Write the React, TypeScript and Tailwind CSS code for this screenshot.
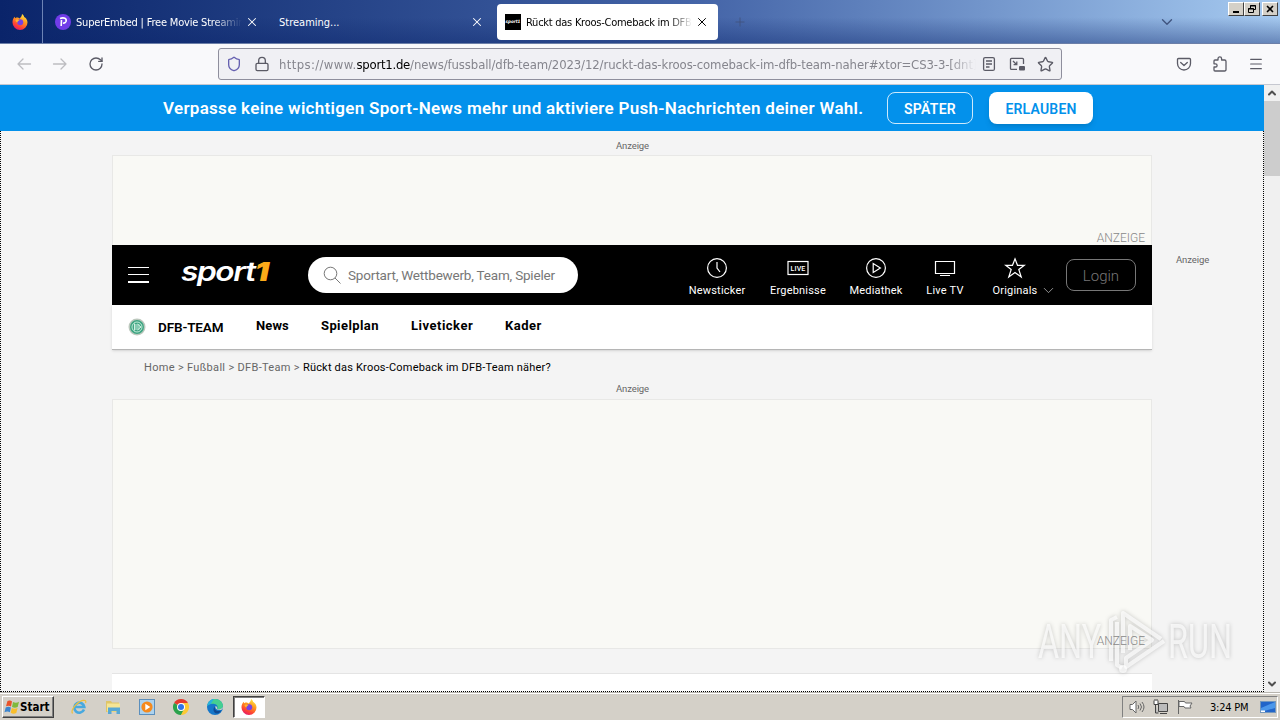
import type { ReactNode } from "react";
import { ChevronDown, ChevronUp, Lock, Menu, Plus, RotateCw, Shield, Star, X } from "lucide-react";
import clsx from "clsx";

const NAV_LINKS = [
  { label: "News", className: "w-[65px] tracking-[0.1px]" },
  { label: "Spielplan", className: "w-[90px] tracking-[0.4px]" },
  { label: "Liveticker", className: "w-[94px] tracking-[0.5px]" },
  { label: "Kader", className: "w-[60px] tracking-[0.5px]" },
];

function FirefoxIcon() {
  return (
    <svg viewBox="0 0 16 16" className="size-4 shrink-0">
      <defs>
        <linearGradient id="fox" x1="0.8" y1="0" x2="0.3" y2="1">
          <stop offset="0" stopColor="#fff04a" />
          <stop offset="0.4" stopColor="#ff9a1f" />
          <stop offset="0.75" stopColor="#ff4433" />
          <stop offset="1" stopColor="#e3186c" />
        </linearGradient>
      </defs>
      <path d="M10 0c1.500 1 2 2.200 2.200 3 .8.3 3.300 2.200 3.300 5.500A7.500 7.500 0 0 1 .5 8.500C.4 6 1.500 3.700 2.800 2.700l.4 1.500 1.200-.7C6 3.300 7 4 7.500 4.500 8.500 3.500 10 2.500 10 0z" fill="url(#fox)" />
      <circle cx="8.200" cy="8.300" r="3" fill="#7542e5" />
      <path d="M3.500 6c1.500-.8 2.500-.6 4 .2C6 7 5.500 7 5.600 8.500c-1-.2-2-1-2.100-2.500z" fill="#ffb52e" />
    </svg>
  );
}

function WindowButton({ children, className }: { children: ReactNode; className?: string }) {
  return (
    <div className={clsx("flex h-[14px] w-4 items-center justify-center border border-t-white border-l-white border-r-[#404040] border-b-[#404040] bg-[#d4d0c8]", className)}>
      {children}
    </div>
  );
}

function TabBar() {
  return (
    <div className="flex h-11 border-b border-[#6c7fa8] bg-linear-to-r from-[#0a246a] via-[#4565a8] via-55% to-[#a6caf0] text-[11px] text-white">
      <div className="flex w-full bg-linear-to-b from-transparent from-40% to-[#0a246a]/40">
        <div className="flex w-[43px] items-center justify-center border-r border-[#6d83b5] pr-0.5">
          <FirefoxIcon />
        </div>
        <div className="flex w-[225px] items-center pl-3">
          <div className="mr-[5px] flex size-4 items-center justify-center rounded-full bg-[#713ce8]">
            <svg viewBox="0 0 16 16" className="size-4">
              <path d="M5 4.500c4-1.500 7 0 6 3-.8 2-3 1.500-3 1.500M6.500 6l-.3 6" fill="none" stroke="#fff" strokeWidth="1.600" />
            </svg>
          </div>
          <span className="w-[166px] overflow-hidden pt-[3px] tracking-[-0.19px] whitespace-nowrap [mask-image:linear-gradient(to_right,#000_82%,transparent)]">SuperEmbed | Free Movie Streaming</span>
          <X className="ml-[3px] size-3.5 shrink-0" strokeWidth={1.8} />
        </div>
        <div className="flex w-[229px] items-center pl-[11px]">
          <span className="w-[191px] pt-[3px]">Streaming...</span>
          <X className="size-3.5" strokeWidth={1.8} />
        </div>
        <div className="mt-1 flex h-9 w-[221px] items-center rounded bg-white pl-2 text-black">
          <div className="mr-[5px] flex size-4 items-center justify-center overflow-hidden bg-black text-[4.500px] font-bold text-white italic">sport1</div>
          <span className="w-[166px] overflow-hidden pt-[3px] tracking-[-0.26px] whitespace-nowrap [mask-image:linear-gradient(to_right,#000_86%,transparent)]">Rückt das Kroos-Comeback im DFB-Team</span>
          <X className="ml-[3px] size-3.5 shrink-0" strokeWidth={1.7} />
        </div>
        <div className="flex flex-1 items-center justify-between pl-[15px] text-[#40547f]">
          <Plus className="size-3.5" strokeWidth={1.5} />
          <ChevronDown className="mr-2 ml-auto size-[18px]" strokeWidth={1.8} />
        </div>
        <div className="flex w-[96px] justify-end pt-0.5 pr-0.5">
          <div className="flex h-[14px]">
            <WindowButton><i className="mt-1.5 h-0.5 w-1.5 bg-black" /></WindowButton>
            <WindowButton>
              <svg viewBox="0 0 10 10" className="size-2.5" fill="none" stroke="#000">
                <path d="M3.500 4V1.500h5v4H7M3 2h6M1.500 4.500h5v4h-5zM1 5h6" />
              </svg>
            </WindowButton>
            <WindowButton className="ml-0.5"><X className="size-2.5 text-black" strokeWidth={4} /></WindowButton>
          </div>
        </div>
      </div>
    </div>
  );
}

function Arrow({ flip }: { flip?: boolean }) {
  return (
    <svg viewBox="0 0 16 16" className={clsx("size-4", flip && "rotate-180")} fill="none" stroke="#bdbdc1" strokeWidth="1.300" strokeLinecap="round" strokeLinejoin="round">
      <path d="M14.500 8H2M7 3 2 8l5 5" />
    </svg>
  );
}

function Toolbar() {
  return (
    <div className="flex h-[41px] items-center border-b border-[#c6c8d0] bg-[#f9f9fb] text-[#5b5b66]">
      <div className="flex w-[218px] items-center gap-5 pl-4">
        <Arrow />
        <Arrow flip />
        <RotateCw className="size-4" strokeWidth={2} />
      </div>
      <div className="flex h-8 w-[844px] items-center rounded-[3px] border border-[#8f8f9d] bg-[#f0f0f4] pl-[7px]">
        <Shield className="size-4 text-[#6560b0]" strokeWidth={2} />
        <Lock className="ml-3 size-4" strokeWidth={2} />
        <span className="ml-[9px] w-[697px] shrink-0 overflow-hidden pt-0.5 text-[13px] font-light tracking-[-0.11px] whitespace-nowrap text-[#85858d] [mask-image:linear-gradient(to_right,#000_96%,transparent)]">
          <span className="tracking-[0.36px]">https://www.</span>
          <span className="font-normal tracking-[-0.25px] text-black">sport1.de</span>/news/fussball/dfb-team/2023/12/ruckt-das-kroos-comeback-im-dfb-team-naher#xtor=CS3-3-[dnt]
        </span>
        <svg viewBox="0 0 16 16" className="ml-[5px] size-4" fill="none" stroke="currentColor" strokeWidth="1.300">
          <rect x="2.600" y="1.600" width="10.800" height="12.800" rx="1.500" />
          <path d="M5 5h6M5 8h6M5 11h3.500" />
        </svg>
        <svg viewBox="0 0 16 16" className="ml-3 size-4" fill="none" stroke="currentColor" strokeWidth="1.300">
          <path d="M8 13.400H2.500a1 1 0 0 1-1-1v-9a1 1 0 0 1 1-1h11a1 1 0 0 1 1 1V8M4 5l3.500 3.500M7.800 5.500v3.200H4.600" />
          <rect x="10" y="10" width="6" height="4.500" rx="1" fill="currentColor" stroke="none" />
        </svg>
        <Star className="ml-3 size-[17px]" strokeWidth={1.9} />
      </div>
      <div className="ml-[114px] flex items-center gap-5">
        <svg viewBox="0 0 16 16" className="size-4" fill="none" stroke="currentColor" strokeWidth="1.300" strokeLinecap="round" strokeLinejoin="round">
          <path d="M1.500 3.500a1 1 0 0 1 1-1h11a1 1 0 0 1 1 1V7.500a6.500 6.500 0 0 1-13 0zM4.700 6.500 8 9.500l3.300-3" />
        </svg>
        <svg viewBox="0 0 16 16" className="size-4" fill="none" stroke="currentColor" strokeWidth="1.300" strokeLinejoin="round">
          <path d="M2 6V5a1 1 0 0 1 1-1h3V2.700a1.800 1.800 0 0 1 3.600 0V4h3a1.400 1.400 0 0 1 1.400 1.400v8A1.400 1.400 0 0 1 12.600 15H3a1 1 0 0 1-1-1v-3h1.500a1.500 1.500 0 0 0 0-3.200H2z" />
        </svg>
        <Menu className="size-4" strokeWidth={1.8} />
      </div>
    </div>
  );
}

function PushBanner() {
  return (
    <div className="flex h-[46px] items-center bg-[#0391eb] pl-[163px] font-['Roboto'] text-white">
      <span className="w-[724px] pt-0.5 text-[17px] font-semibold tracking-[0.29px] whitespace-nowrap">
        Verpasse keine wichtigen Sport-News mehr und aktiviere Push-Nachrichten deiner Wahl.
      </span>
      <button className="h-8 w-[86px] rounded-lg border border-white/80 pt-0.5 text-[14px] font-semibold tracking-[0.3px]">SPÄTER</button>
      <button className="ml-4 h-8 w-[104px] rounded-lg bg-white pt-0.5 text-[14px] font-semibold tracking-[0.2px] text-[#0391eb] shadow-md">ERLAUBEN</button>
    </div>
  );
}

function HeaderItem({ label, className, children }: { label: string; className: string; children: ReactNode }) {
  return (
    <div className={clsx("flex flex-col items-center text-[11px] leading-[14px] tracking-[0.2px] text-white", className)}>
      <svg viewBox="0 0 22 22" className="mb-[5px] size-[22px]" fill="none" stroke="#fff" strokeWidth="1.200">
        {children}
      </svg>
      <span className="whitespace-nowrap">{label}</span>
    </div>
  );
}

function SiteHeader() {
  return (
    <header className="flex h-[60px] items-center bg-black">
      <div className="ml-4 flex w-[21px] flex-col gap-[6px]">
        <i className="h-px bg-white" />
        <i className="h-px bg-white" />
        <i className="h-0.5 bg-white" />
      </div>
      <div className="ml-8 w-[91px] text-[26px] leading-[30px] font-semibold whitespace-nowrap text-white italic">
        <span className="inline-block origin-left -translate-y-[3px] scale-x-[1.22] font-['Inter'] tracking-[-0.045em]">
          sport<b className="text-[#fbaa19]">1</b>
        </span>
      </div>
      <div className="ml-9 flex h-9 w-[270px] items-center rounded-full bg-white pl-[15px] text-[#777]">
        <svg viewBox="0 0 18 18" className="size-[18px]" fill="none" stroke="currentColor" strokeWidth="1">
          <circle cx="7.500" cy="7.500" r="6.300" />
          <path d="m12 12 5.500 5.500" />
        </svg>
        <span className="ml-[7px] pt-px text-[13.500px] tracking-[-0.2px] whitespace-nowrap">Sportart, Wettbewerb, Team, Spieler</span>
      </div>
      <div className="ml-[109px] flex pt-1">
        <HeaderItem label="Newsticker" className="w-[60px]">
          <circle cx="11" cy="11" r="9.400" />
          <path d="M11 5v6l3 4" />
        </HeaderItem>
        <HeaderItem label="Ergebnisse" className="ml-5 w-[62px]">
          <rect x="1" y="4.500" width="20" height="13" />
          <text x="11" y="14" fontSize="8" fontWeight="500" textAnchor="middle" textLength="15" lengthAdjust="spacingAndGlyphs" fill="#fff" stroke="none">LIVE</text>
        </HeaderItem>
        <HeaderItem label="Mediathek" className="ml-[18px] w-[58px]">
          <circle cx="11" cy="11" r="9.400" />
          <path d="M8.200 6.500v9l7.200-4.500z" />
        </HeaderItem>
        <HeaderItem label="Live TV" className="ml-5 w-10">
          <path d="M1.500 4.500h19v12h-19zM6 18.500h10" />
        </HeaderItem>
        <HeaderItem label="Originals" className="ml-[25px] w-[50px]">
          <path d="m11 1.800 2.500 6.500h6.800l-5.500 4.200 2.400 7.500-6.200-4.500L4.800 20l2.400-7.500L1.700 8.300h6.800z" />
        </HeaderItem>
      </div>
      <ChevronDown className="mt-[31px] size-[17px] text-[#aaa]" strokeWidth={1.2} />
      <button className="mr-4 ml-auto h-8 w-[70px] rounded-lg border border-[#777] pt-0.5 text-[15px] font-light text-[#777]">Login</button>
    </header>
  );
}

function SubNav() {
  return (
    <nav className="flex h-[45px] border-b border-[#b5b5b5] bg-white pl-4 text-[13px] font-bold text-black shadow-sm">
      <svg viewBox="0 0 18 18" className="mt-[13px] size-[18px]" fill="none">
        <circle cx="9" cy="9" r="8.500" fill="#bcc8bd" />
        <circle cx="9" cy="9" r="7" fill="#3fa583" />
        <circle cx="9" cy="9" r="5" stroke="#bfead7" />
        <path d="M6.500 5.500v7M6.500 7h5M6.500 9h6M6.500 11h5m-2-5 3.500 3-3.500 3" stroke="#dff7eb" strokeWidth=".9" />
      </svg>
      <span className="mt-3 ml-3 w-[98px] text-[13.500px] leading-5 font-semibold tracking-[-0.01em]">DFB-TEAM</span>
      {NAV_LINKS.map((link) => (
        <a key={link.label} className={clsx("mt-[11px] leading-5 whitespace-nowrap", link.className)}>{link.label}</a>
      ))}
    </nav>
  );
}

function AdSlot({ className }: { className: string }) {
  return (
    <div className={clsx("flex items-end justify-end border border-[#e8e8e6] bg-[#f9f9f5] pr-1.5 text-[12px] leading-[14px] font-light text-[#888]", className)}>
      <span className="relative z-10">ANZEIGE</span>
    </div>
  );
}

function ScrollBar() {
  return (
    <div className="flex w-4 flex-col items-center bg-[#f0f0f0] text-[#505050]">
      <ChevronUp className="h-4 w-3" strokeWidth={4} />
      <div className="h-[75px] w-4 bg-[#cdcdcd]" />
      <ChevronDown className="mt-auto h-4 w-3" strokeWidth={4} />
    </div>
  );
}

function Page() {
  return (
    <div className="flex h-[607px]">
      <div className="flex w-[1264px] flex-col">
        <PushBanner />
        <div className="flex h-[561px] overflow-hidden border-x border-b border-dotted border-black bg-[#f4f4f4] font-['Roboto'] text-[#666]">
          <div className="w-[111px]" />
          <main className="flex w-[1040px] shrink-0 flex-col">
            <div className="h-6 pt-2 pl-px text-center text-[9.500px] leading-[14px] tracking-[-0.1px]">Anzeige</div>
            <AdSlot className="h-[90px] border-b-0" />
            <SiteHeader />
            <SubNav />
            <div className="flex h-[31px] gap-[3px] pt-[9px] pl-8 text-[11px] leading-[18px] tracking-[0.26px]">
              <span className="tracking-[0.32px]">Home &gt; Fußball &gt; DFB-Team &gt;</span>
              <span className="tracking-[0.2px] text-black">Rückt das Kroos-Comeback im DFB-Team näher?</span>
            </div>
            <div className="h-[18px] pl-px text-center text-[9.500px] leading-[15px] tracking-[-0.1px]">Anzeige</div>
            <AdSlot className="h-[250px]" />
            <div className="mt-6 flex-1 border-t border-[#e4e4e4] bg-white" />
          </main>
          <div className="pt-[122px] pl-6 text-[9.500px] leading-[14px] tracking-[-0.1px]">Anzeige</div>
        </div>
      </div>
      <ScrollBar />
    </div>
  );
}

function Watermark() {
  return (
    <div className="absolute top-[607px] left-[1038px] flex h-[66px] w-[196px] items-center pt-0.5 font-['Roboto'] text-[49px] leading-none text-white/70 drop-shadow-[0_0_2px_rgba(0,0,0,0.28)]">
      <span className="w-[70px]"><span className="inline-block origin-left scale-x-[0.66]">ANY</span></span>
      <svg viewBox="0 0 60 66" className="h-[66px] w-[60px]" fill="none" stroke="currentColor" strokeWidth="4" strokeLinejoin="round">
        <path d="M3 53V12l6-3M15 45V5l38 26M22 42V18l22 14-26 18v9l38-26M9 14v43l5 3" />
        <circle cx="15" cy="61" r="2" />
      </svg>
      <span className="w-[66px]"><span className="inline-block origin-left scale-x-[0.66]">RUN</span></span>
    </div>
  );
}

function Taskbar() {
  return (
    <footer className="flex h-7 items-center border-t border-[#b8b5ae] bg-[#d4d0c8] pt-px text-[11px] text-black shadow-[inset_0_1px_0_#fff]">
      <div className="ml-0.5 flex h-[22px] w-[52px] items-center border border-t-white border-l-white border-r-[#404040] border-b-[#404040] pl-px font-bold shadow-[inset_-1px_-1px_0_#808080]">
        <svg viewBox="0 0 16 16" className="size-4 shrink-0">
          <path d="M3.500 2C5 1 7 1.500 8 2.500L7 7.500C5.500 6.500 4 6.500 2 7.200z" fill="#e9532a" />
          <path d="M9 3c2 1 4 1 6-.3L13.700 8c-2 1-4 .8-5.700 0z" fill="#80b93b" />
          <path d="M1.700 8.500c2-1 3.800-.8 5.200.1l-1 4.700C4.300 12.200 2.500 12.300.5 13.200z" fill="#3c85ce" />
          <path d="M7.800 9c2 1 4 .9 5.800 0l-1.300 5c-2 1-4 .8-5.600-.3z" fill="#f9be2b" />
        </svg>
        <span className="pt-0.5 text-[11.500px]">Start</span>
      </div>
      <div className="ml-[17px] flex items-center gap-[18px]">
        {/* Internet Explorer */}
        <svg viewBox="0 0 16 16" className="size-4" fill="none">
          <path d="M13 10.500A5 5 0 1 1 13.300 8H4" stroke="#48a9df" strokeWidth="2.600" />
          <path d="M1.500 14.500C-1 10 9 0 14 1.500c1 .4 1 1.500.5 2.500" stroke="#eebf3b" strokeWidth="1.200" />
        </svg>
        {/* File explorer */}
        <svg viewBox="0 0 16 16" className="size-4">
          <path d="M1 2h5l1 1.500h7V13H1z" fill="#dfc568" />
          <path d="M2 4.500h13v8H2z" fill="#f5e595" />
          <path d="M3 8.500h12v6.500h-3.500v-3h-5v3H3z" fill="#58a8d4" />
        </svg>
        {/* Media player */}
        <svg viewBox="0 0 16 16" className="size-4">
          <rect x=".5" y=".5" width="15" height="15" fill="#acd2ee" stroke="#5b8fbd" />
          <circle cx="8" cy="8" r="5.600" fill="#f58a1d" />
          <path d="M6.300 4.800v6.400L11.300 8z" fill="#fff" />
        </svg>
        {/* Chrome */}
        <svg viewBox="0 0 16 16" className="size-4">
          <path d="M8 8 1.070 4A8 8 0 0 1 14.930 4z" fill="#e33b2e" />
          <path d="M8 8 1.070 4A8 8 0 0 0 8 16l4-6z" fill="#2ba24c" />
          <path d="M8 4h6.930A8 8 0 0 1 8 16l4-8z" fill="#fcc934" />
          <circle cx="8" cy="8" r="4" fill="#fff" />
          <circle cx="8" cy="8" r="3" fill="#2e74e8" />
        </svg>
        {/* Edge */}
        <svg viewBox="0 0 16 16" className="size-4">
          <circle cx="8" cy="8" r="8" fill="#1677c9" />
          <path d="M.2 7C1 2.500 4.500 0 8 0c4.500 0 8 3.300 8 7 0 3-3.500 4.300-6 3 1.300-2 .5-4.500-2.500-5C4 4.500 1.500 5.500.2 7z" fill="#45cf91" />
          <path d="M.2 7C1 2.500 4 0 7 0c-1 2-2.500 3-3 5-1.500.3-2.800 1-3.800 2z" fill="#27b2de" />
          <path d="M8 7.500c-1 3.500 2 5.500 6.500 4-1.500 2-3 3-4.500 3C6 14 5.500 9.500 8 7.500z" fill="#104a92" />
          <path d="M8.500 7c-.8 2.500 2 5 6 3.800 1-.7 1.500-1.500 1.500-2.800-1.500 2.500-4.500 2.800-6 2 .6-1 .3-2.300-1.500-3z" fill="#d4d0c8" />
        </svg>
      </div>
      <div className="ml-[10px] flex h-[22px] w-8 items-center justify-center border border-t-[#404040] border-l-[#404040] border-r-white border-b-white bg-white shadow-[inset_1px_1px_0_#808080]">
        <FirefoxIcon />
      </div>
      <div className="mr-0.5 ml-auto flex h-[22px] w-[156px] items-center border border-t-[#808080] border-l-[#808080] border-r-white border-b-white pl-1.5">
        <svg viewBox="0 0 16 16" className="size-4" fill="none" stroke="#666">
          <path d="M1 5.500h2.500L7 2v12l-3.500-3.500H1z" fill="#fff" />
          <path d="M9 6q1.500 2 0 4M11 4.500q3 3.500 0 7M13 3q4 5 0 10" />
        </svg>
        <svg viewBox="0 0 16 16" className="ml-2 size-4" fill="none" stroke="#444">
          <path d="M5.500 4.500h9v8h-9zM7 14.500h7M2.500 6v8h3" fill="#bbb" />
          <path d="M1 1.500v4h4v-4M2 0v2M4 0v2" fill="#fff" />
        </svg>
        <svg viewBox="0 0 16 16" className="ml-2 size-4" fill="#fff" stroke="#666">
          <path d="M1.500 1v14M2 2.500h5.500l1 1.500H15l-2 3 1 2H8l-1-1.500H2z" />
        </svg>
        <span className="ml-[17px] w-[50px] pt-0.5 tracking-[-0.02em] whitespace-nowrap">3:24 PM</span>
        <svg viewBox="0 0 16 14" className="h-[14px] w-4">
          <rect x=".5" y="1.500" width="15" height="11" fill="#2265c9" stroke="#7397bd" />
          <path d="M1 8 15 2v6L1 12z" fill="#4c97ea" />
          <path d="M1 10.500h4V12H1z" fill="#fff" />
        </svg>
      </div>
    </footer>
  );
}

export default function App() {
  return (
    <div className="relative h-[720px] w-[1280px] overflow-hidden font-['DejaVu_Sans_Condensed','DejaVu_Sans',sans-serif]">
      <TabBar />
      <Toolbar />
      <Page />
      <Taskbar />
      <Watermark />
    </div>
  );
}
